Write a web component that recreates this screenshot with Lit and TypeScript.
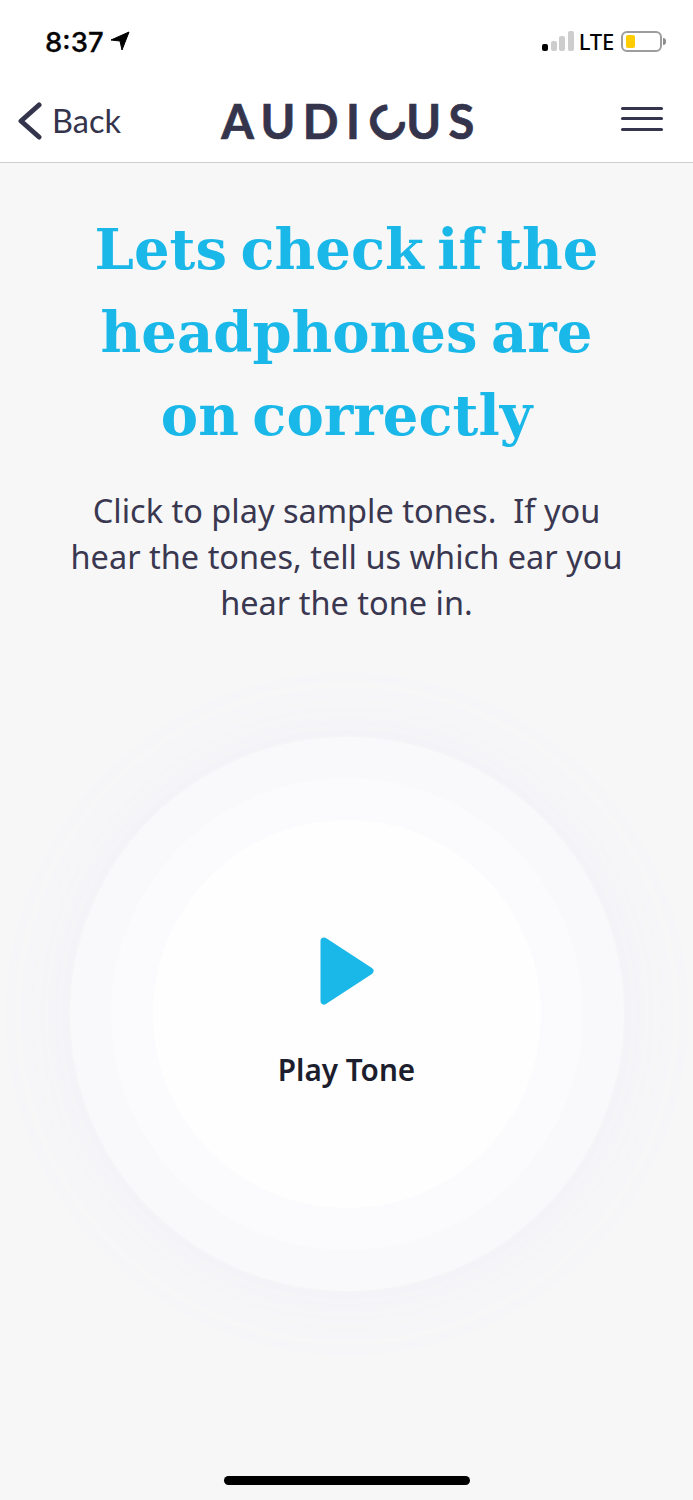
import { LitElement, css, html } from "lit";
import { customElement } from "lit/decorators.js";

@customElement("app-root")
export class AppRoot extends LitElement {
    static styles = css`
        :host {
            display: block;
            width: 693px;
            height: 1500px;
            overflow: hidden;
            background: #f7f7f8;
            font-family: "Noto Sans", sans-serif;
        }

        .top {
            height: 162px;
            background: #fff;
            border-bottom: 1px solid #cfcfd1;
            display: flex;
            flex-direction: column;
        }

        .status {
            height: 80px;
            display: flex;
            align-items: center;
            padding: 4px 27px 0 45px;
            box-sizing: border-box;
        }

        .time {
            font-family: Inter, sans-serif;
            font-weight: 500;
            font-size: 27.5px;
            color: #050505;
            margin-right: 6px;
            -webkit-text-stroke: 0.3px #050505;
        }

        .status svg {
            margin-top: -2px;
        }

        .spacer {
            flex: 1;
        }

        .signal {
            display: flex;
            align-items: flex-end;
            gap: 2.5px;
            height: 20px;
            margin-right: 5px;
            margin-top: -2px;
        }

        .signal i {
            width: 6px;
            border-radius: 2px;
            background: #cdcdcd;
        }

        .signal i.on {
            background: #000;
        }

        .lte {
            font-size: 22px;
            font-weight: 500;
            color: #050505;
            margin-right: 7px;
            margin-top: -2px;
            letter-spacing: -0.2px;
        }

        .battery {
            width: 41px;
            height: 21px;
            box-sizing: border-box;
            border: 2px solid #9d9d9d;
            border-radius: 6px;
            padding: 2px 3px;
            margin-right: 1px;
            margin-top: -2px;
        }

        .battery b {
            display: block;
            width: 9px;
            height: 13px;
            border-radius: 2px;
            background: #ffcc00;
        }

        .nub {
            width: 3px;
            height: 7px;
            margin-top: -2px;
            background: #8e8e8e;
            border-radius: 0 3px 3px 0;
        }

        .nav {
            flex: 1;
            display: grid;
            grid-template-columns: 1fr auto 1fr;
            align-items: center;
            padding: 0 30px 2px;
            color: #34344c;
        }

        .back {
            display: flex;
            align-items: center;
            gap: 10px;
            margin-left: -13px;
            font-family: Lato, sans-serif;
            font-size: 32.5px;
        }

        .back svg {
            margin-top: 2px;
        }

        .logo {
            font-family: Lato, sans-serif;
            font-weight: 700;
            font-size: 47px;
            line-height: 50px;
            letter-spacing: 7.5px;
            margin: 2px -10px 0 0;
            white-space: nowrap;
            -webkit-text-stroke: 0.7px #34344c;
        }

        .logo span {
            display: inline-block;
            transform: rotate(-45deg);
        }

        .menu {
            justify-self: end;
            display: flex;
            flex-direction: column;
            gap: 7.5px;
            width: 42px;
            margin-bottom: 3px;
        }

        .menu i {
            height: 3px;
            border-radius: 2px;
            background: #34344c;
        }

        main {
            display: flex;
            flex-direction: column;
            align-items: center;
            padding-top: 45px;
            text-align: center;
        }

        h1 {
            margin: 0;
            font-family: "DejaVu Serif", serif;
            font-weight: 700;
            font-size: 56px;
            word-spacing: -6px;
            line-height: 83px;
            color: #1ab8e8;
        }

        p {
            margin: 31px 0 0;
            font-size: 32.5px;
            line-height: 46px;
            color: #3a3850;
            white-space: pre-line;
        }

        .ring {
            border-radius: 50%;
            display: flex;
            align-items: center;
            justify-content: center;
        }

        .outer {
            width: 554px;
            height: 554px;
            margin-top: 111px;
            background: #f9f9fb;
            box-shadow: 0 0 80px 10px #f2f2f7;
        }

        .middle {
            width: 472px;
            height: 472px;
            background: #fbfbfd;
        }

        .inner {
            width: 388px;
            height: 388px;
            background: #fefefe;
            flex-direction: column;
        }

        .inner svg {
            display: block;
            margin-top: -1px;
        }

        .label {
            margin-top: 45px;
            font-size: 29.7px;
            font-weight: 600;
            line-height: 40px;
            color: #1c1e2e;
        }

        .home {
            position: absolute;
            left: 224px;
            top: 1476px;
            width: 246px;
            height: 9px;
            border-radius: 5px;
            background: #000;
        }
    `;

    render() {
        return html`
            <div class="top">
                <div class="status">
                    <span class="time">8:37</span>
                    <svg width="20" height="20" viewBox="0 0 20 20">
                        <path d="M1 9 L19 1 L12 19 L10 10 Z" fill="#000" stroke="#000" stroke-width="1" stroke-linejoin="round" />
                    </svg>
                    <span class="spacer"></span>
                    <div class="signal">
                        <i class="on" style="height:7px"></i>
                        <i style="height:10px"></i>
                        <i style="height:15px"></i>
                        <i style="height:20px"></i>
                    </div>
                    <span class="lte">LTE</span>
                    <div class="battery"><b></b></div>
                    <div class="nub"></div>
                </div>
                <div class="nav">
                    <div class="back">
                        <svg width="25" height="38" viewBox="0 0 25 38">
                            <path d="M22 3 L4 19 L22 35" fill="none" stroke="#34344c" stroke-width="5" stroke-linecap="round" stroke-linejoin="round" />
                        </svg>
                        Back
                    </div>
                    <div class="logo">AUDI<span>C</span>US</div>
                    <div class="menu"><i></i><i></i><i></i></div>
                </div>
            </div>
            <main>
                <h1>Lets check if the<br />headphones are<br />on correctly</h1>
                <p>Click to play sample tones.&nbsp; If you
hear the tones, tell us which ear you
hear the tone in.</p>
                <div class="ring outer">
                    <div class="ring middle">
                        <div class="ring inner">
                            <svg width="54" height="68" viewBox="0 0 54 68">
                                <path d="M4 4 L50 34 L4 64 Z" fill="#1ab8e8" stroke="#1ab8e8" stroke-width="7" stroke-linejoin="round" />
                            </svg>
                            <div class="label">Play Tone</div>
                        </div>
                    </div>
                </div>
            </main>
            <div class="home"></div>
        `;
    }
}
